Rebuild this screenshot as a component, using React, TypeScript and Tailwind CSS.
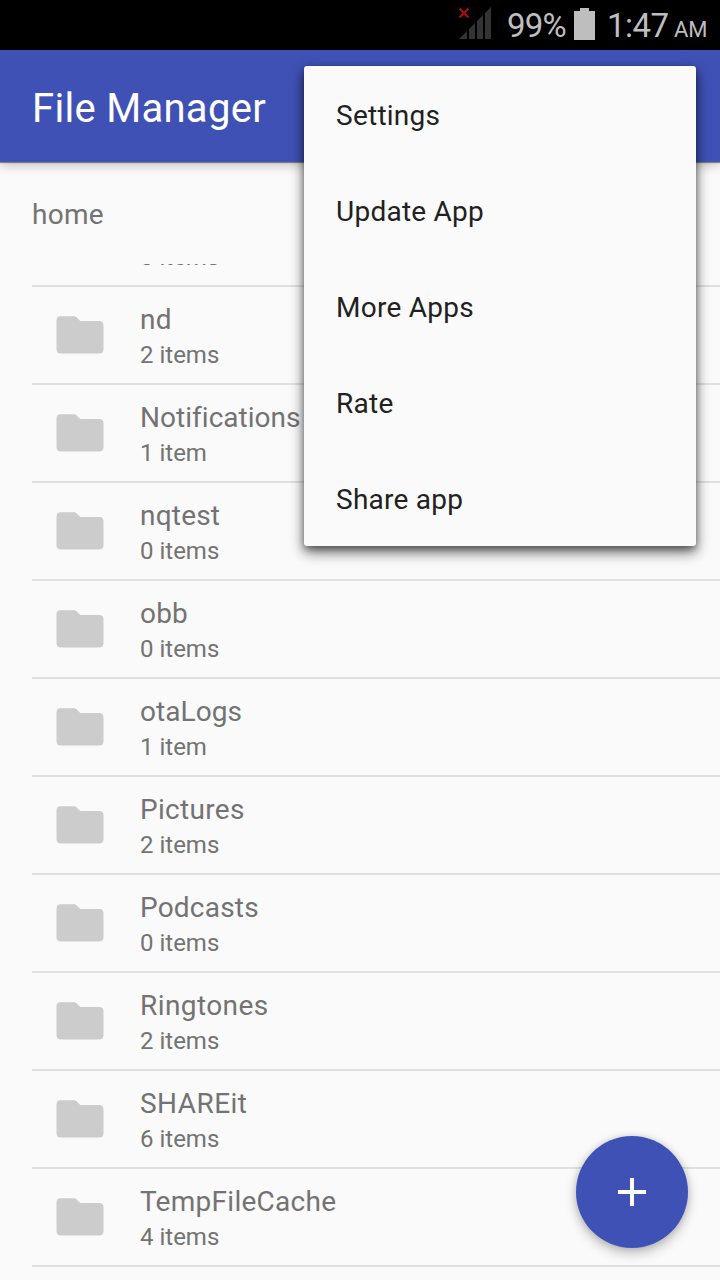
type Folder = { name: string; count: string; tracking?: string };

const folders: Folder[] = [
  { name: "Music", count: "0 items" },
  { name: "nd", count: "2 items" },
  { name: "Notifications", count: "1 item", tracking: "tracking-[0.03px]" },
  { name: "nqtest", count: "0 items" },
  { name: "obb", count: "0 items" },
  { name: "otaLogs", count: "1 item", tracking: "tracking-[0.06px]" },
  { name: "Pictures", count: "2 items", tracking: "tracking-[0.3px]" },
  { name: "Podcasts", count: "0 items" },
  { name: "Ringtones", count: "2 items", tracking: "tracking-[0.42px]" },
  { name: "SHAREit", count: "6 items", tracking: "tracking-[0.45px]" },
  { name: "TempFileCache", count: "4 items", tracking: "tracking-[0.27px]" },
  { name: "", count: "" },
];

const menuItems = ["Settings", "Update App", "More Apps", "Rate", "Share app"];

function SignalIcon() {
  return (
    <svg width="33" height="33" viewBox="0 0 33 33" className="block shrink-0">
      <path
        d="M0 32 8 24V32ZM10 22 16 16V32H10ZM18 14 24 8V32H18ZM26 6 32 0V32H26Z"
        fill="#333333"
      />
      <path d="M.5 1.5 9.5 10.5M9.5 1.5 .5 10.5" stroke="#a80f0f" strokeWidth="2.2" />
    </svg>
  );
}

function BatteryIcon() {
  return (
    <svg width="21" height="32" viewBox="0 0 21 32" className="block shrink-0">
      <path d="M6 0H15V3H21V32H0V3H6Z" fill="#bebebe" />
    </svg>
  );
}

function StatusBar() {
  return (
    <div className="flex h-[50px] shrink-0 bg-black pl-[459px] text-[#bebebe]">
      <div className="pt-[7px]">
        <SignalIcon />
      </div>
      <span className="ml-[15px] w-[67px] whitespace-nowrap text-[33px] leading-[52px] tracking-[-0.8px]">99%</span>
      <div className="pt-2">
        <BatteryIcon />
      </div>
      <span className="ml-[12px] w-[62px] whitespace-nowrap text-[33px] leading-[52px] tracking-[-0.5px]">1:47</span>
      <span className="ml-[5px] whitespace-nowrap text-[22px] leading-[59px]">AM</span>
    </div>
  );
}

function FolderRow({ name, count, tracking = "tracking-[0.2px]" }: Folder) {
  return (
    <li className="ml-8 flex h-[98px] shrink-0 items-start border-b-2 border-[#e0e0e0]">
      <svg width="48" height="38" viewBox="0 0 48 38" className="ml-6 mt-[29px] block shrink-0">
        <path
          d="M4.8 .3H18.2Q19.5 .3 20.4 1.2L24.4 5H43.2Q47.5 5 47.5 9.3V33Q47.5 37.5 43.2 37.5H4.8Q.5 37.5.5 33V4.5Q.5 .3 4.8 .3Z"
          fill="#cccccc"
        />
      </svg>
      <div className="ml-9 mt-4 flex flex-col whitespace-nowrap text-[#737373]">
        <span className={`h-[33px] text-[28px] leading-[33px] ${tracking}`}>{name}</span>
        <span className="mt-1 text-[24px] leading-[30px]">{count}</span>
      </div>
    </li>
  );
}

export default function App() {
  return (
    <div className="relative flex h-[1280px] w-[720px] flex-col overflow-hidden bg-[#fafafa] font-[Roboto,sans-serif]">
      <StatusBar />
      <header className="z-10 flex h-28 shrink-0 items-center bg-[#3f51b5] pl-8 shadow-[0_1px_1px_rgba(0,0,0,0.4),0_4px_10px_rgba(0,0,0,0.2)]">
        <h1 className="pt-[6px] text-[40px] leading-[48px] tracking-[0.3px] text-white">File Manager</h1>
      </header>
      <div className="h-[102px] shrink-0 pl-8 pt-[35px] text-[28px] leading-[36px] tracking-[0.3px] text-[#737373]">home</div>
      <main className="min-h-0 flex-1 overflow-hidden">
        <ul className="-mt-[75px] flex flex-col">
          {folders.map((folder, i) => (
            <FolderRow key={i} {...folder} />
          ))}
        </ul>
      </main>
      <button
        aria-label="Add"
        className="absolute bottom-8 right-8 flex size-28 items-center justify-center rounded-full bg-[#3f51b5] shadow-[0_5px_12px_rgba(0,0,0,0.25),0_0_7px_rgba(0,0,0,0.12)]"
      >
        <svg width="28" height="28" viewBox="0 0 28 28">
          <path d="M12 0H16V12H28V16H16V28H12V16H0V12H12Z" fill="#ffffff" />
        </svg>
      </button>
      <nav className="absolute right-6 top-[66px] z-20 flex w-[392px] flex-col rounded-[3px] bg-[#fafafa] shadow-[0_6px_14px_rgba(0,0,0,0.6),0_3px_6px_rgba(0,0,0,0.3)]">
        {menuItems.map((item) => (
          <a key={item} className="flex h-24 items-center px-8 pt-[3px] text-[28px] leading-[36px] tracking-[0.25px] text-[#212121]">
            {item}
          </a>
        ))}
      </nav>
    </div>
  );
}
